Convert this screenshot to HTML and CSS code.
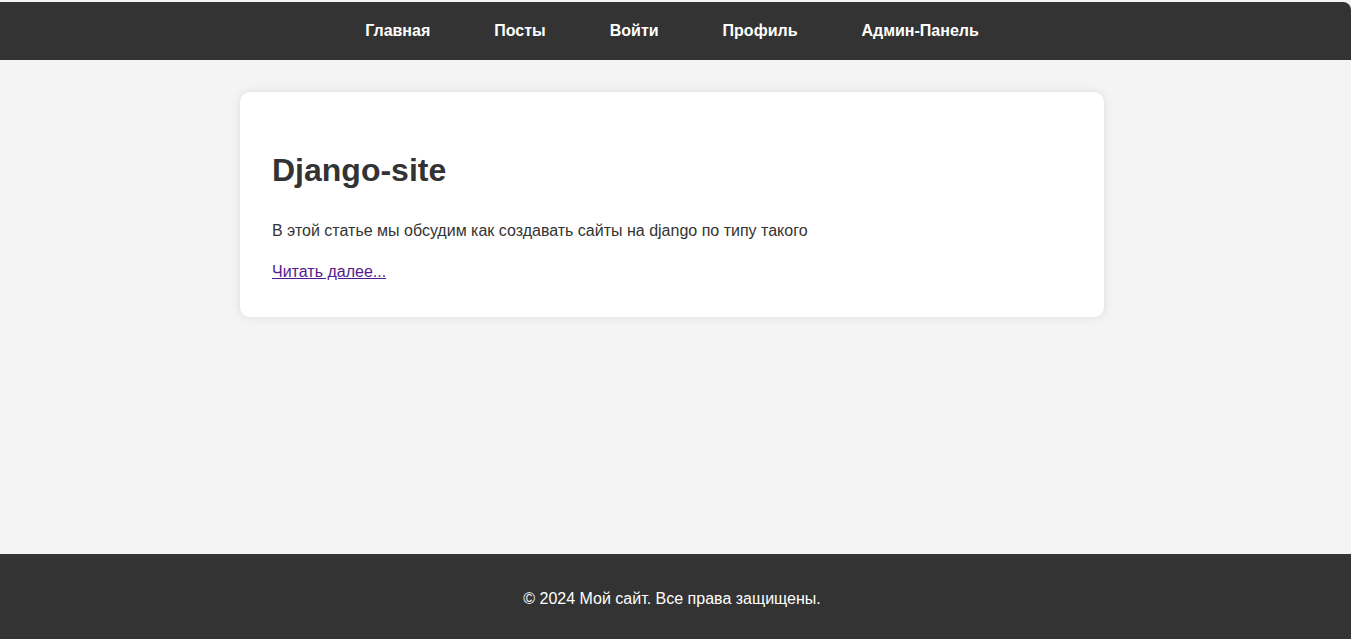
FILE: index.html
```html
<!DOCTYPE html>
<html lang="ru">
<head>
<meta charset="utf-8">
<title>Django-site</title>
<link rel="stylesheet" href="styles.css">
</head>
<body>
<header class="site-header">
  <nav>
    <ul class="nav-list">
      <li><a href="#">Главная</a></li>
      <li><a href="#">Посты</a></li>
      <li><a href="#">Войти</a></li>
      <li><a href="#">Профиль</a></li>
      <li><a href="#">Админ-Панель</a></li>
    </ul>
  </nav>
</header>
<main class="content">
  <article class="card">
    <h1>Django-site</h1>
    <p>В этой статье мы обсудим как создавать сайты на django по типу такого</p>
    <a class="more" href="#">Читать далее...</a>
  </article>
</main>
<footer class="site-footer">
  <p>© 2024 Мой сайт. Все права защищены.</p>
</footer>
</body>
</html>
```

FILE: styles.css
```css
* {
  box-sizing: border-box;
}

body {
  display: flex;
  flex-direction: column;
  min-height: 100vh;
  margin: 0;
  padding-top: 2px;
  background: #f4f4f4;
  color: #333;
  font-family: "Liberation Sans", Arial, sans-serif;
  font-size: 16px;
  line-height: 1.6;
}

.site-header {
  padding: 16px 7px 16px 0;
  border-top-right-radius: 8px;
  background: #333;
}

.nav-list {
  display: flex;
  justify-content: center;
  gap: 64px;
  margin: 0;
  padding: 0;
  list-style: none;
}

.nav-list a {
  color: #fff;
  font-weight: bold;
  text-decoration: none;
}

.content {
  flex: 1;
  padding: 32px 7px 32px 0;
}

.card {
  max-width: 864px;
  margin: 0 auto;
  padding: 32px;
  border-radius: 10px;
  background: #fff;
  box-shadow: 0 0 10px rgba(0, 0, 0, 0.1);
}

h1 {
  margin: 21px 0 22px;
  font-size: 32px;
}

.card p {
  margin: 0 0 16px;
}

.more {
  color: #551a8b;
}

.site-footer {
  padding: 16px 7px 11px 0;
  background: #333;
  color: #fff;
  text-align: center;
}

.site-footer p {
  margin: 16px 0;
}
```
